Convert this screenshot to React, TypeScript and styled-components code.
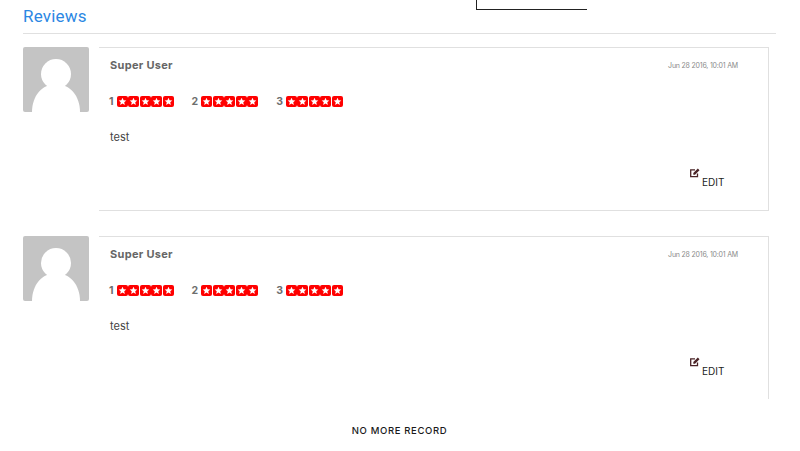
import styled, { createGlobalStyle } from "styled-components";

const GlobalStyle = createGlobalStyle`
  html, body {
    margin: 0;
    padding: 0;
    background: #fff;
    overflow: hidden;
    font-family: "Inter", "Liberation Sans", sans-serif;
  }
`;

const Page = styled.div`
  position: relative;
  width: 800px;
  height: 451px;
  padding: 0 24px 0 23px;
  box-sizing: border-box;
  overflow: hidden;
`;

const DropdownEdge = styled.div`
  position: absolute;
  top: -1px;
  left: 476px;
  width: 110px;
  height: 10px;
  border-left: 1px solid #222;
  border-bottom: 1px solid #222;
`;

const Title = styled.h2`
  margin: 0;
  height: 34px;
  box-sizing: border-box;
  padding-top: 6px;
  font-family: "Roboto", sans-serif;
  font-size: 17px;
  line-height: 21px;
  font-weight: 400;
  letter-spacing: 0.2px;
  color: #2b87e3;
  border-bottom: 1px solid #e0e0e0;
`;

const List = styled.div`
  height: 352px;
  margin-top: 13px;
  overflow: hidden;
  display: flex;
  flex-direction: column;
  gap: 25px;
`;

const Row = styled.div`
  display: flex;
  align-items: flex-start;
  gap: 10px;
  flex-shrink: 0;
`;

const Avatar = styled.svg`
  display: block;
  width: 66px;
  height: 65px;
  flex-shrink: 0;
  border-radius: 2px;
`;

const Card = styled.div`
  width: 670px;
  height: 164px;
  box-sizing: border-box;
  padding: 9px 30px 0 10px;
  border: 1px solid #e0e0e0;
  border-left: none;
`;

const CardHead = styled.div`
  display: flex;
  justify-content: space-between;
  align-items: center;
  height: 16px;
`;

const UserName = styled.span`
  margin-left: 1px;
  font-size: 11px;
  font-weight: 700;
  letter-spacing: 0.3px;
  color: #666;
`;

const DateText = styled.span`
  font-size: 7px;
  letter-spacing: -0.2px;
  color: #8a8a8a;
`;

const Ratings = styled.div`
  display: flex;
  gap: 18px;
  margin-top: 21px;
  height: 14px;
  align-items: center;
`;

const Rating = styled.div`
  display: flex;
  align-items: center;
  gap: 3px;
`;

const RatingLabel = styled.span`
  font-size: 10.5px;
  font-weight: 700;
  color: #6e6e6e;
`;

const Stars = styled.div`
  display: flex;
  gap: 0.5px;
`;

const Star = styled.svg`
  display: block;
  width: 11px;
  height: 11px;
  border-radius: 2px;
  background: #f00;
`;

const Comment = styled.p`
  margin: 22px 0 0 1px;
  font-size: 11px;
  line-height: 14px;
  color: #444;
`;

const EditWrap = styled.div`
  display: flex;
  justify-content: flex-end;
  margin-top: 24px;
  padding-right: 14px;
`;

const EditButton = styled.div`
  width: 34px;
  font-size: 10px;
  line-height: 10px;
  color: #222;
`;

const EditIcon = styled.svg`
  display: block;
  width: 10px;
  height: 10px;
`;

const EditLabel = styled.span`
  display: block;
  margin-top: -1px;
  padding-left: 12px;
`;

const Footer = styled.div`
  margin-top: 26px;
  text-align: center;
  font-size: 9.5px;
  line-height: 12px;
  font-weight: 500;
  letter-spacing: 0.65px;
  color: #1a1a1a;
`;

const reviews = [
  { id: 1, date: "Jun 28 2016, 10:01 AM" },
  { id: 2, date: "Jun 28 2016, 10:01 AM" },
];

const StarBox = () => (
  <Star viewBox="0 0 11 11">
    <path
      d="M5.500 1.800l1.100 2.500 2.700.25-2.050 1.800.6 2.650-2.350-1.400-2.350 1.400.6-2.650-2.050-1.800 2.700-.25z"
      fill="#fff"
    />
  </Star>
);

export default function App() {
  return (
    <Page>
      <GlobalStyle />
      <DropdownEdge />
      <Title>Reviews</Title>
      <List>
        {reviews.map((review) => (
          <Row key={review.id}>
            <Avatar viewBox="0 0 66 65">
              <rect width="66" height="65" fill="#c4c4c4" />
              <circle cx="33" cy="27" r="15" fill="#fff" />
              <path d="M9 65c0-16 10-28 24-28s24 12 24 28z" fill="#fff" />
            </Avatar>
            <Card>
              <CardHead>
                <UserName>Super User</UserName>
                <DateText>{review.date}</DateText>
              </CardHead>
              <Ratings>
                {[1, 2, 3].map((n) => (
                  <Rating key={n}>
                    <RatingLabel>{n}</RatingLabel>
                    <Stars>
                      {[0, 1, 2, 3, 4].map((s) => (
                        <StarBox key={s} />
                      ))}
                    </Stars>
                  </Rating>
                ))}
              </Ratings>
              <Comment>test</Comment>
              <EditWrap>
                <EditButton>
                  <EditIcon viewBox="0 0 10 10">
                    <path
                      d="M7.500 5.500v3.200h-6.800v-6.800h4.300"
                      fill="none"
                      stroke="#4a2326"
                      strokeWidth="1.300"
                    />
                    <path d="M3.300 5l4.500-4.500 1.700 1.700-4.500 4.500h-1.700z" fill="#4a2326" />
                  </EditIcon>
                  <EditLabel>EDIT</EditLabel>
                </EditButton>
              </EditWrap>
            </Card>
          </Row>
        ))}
      </List>
      <Footer>NO MORE RECORD</Footer>
    </Page>
  );
}
